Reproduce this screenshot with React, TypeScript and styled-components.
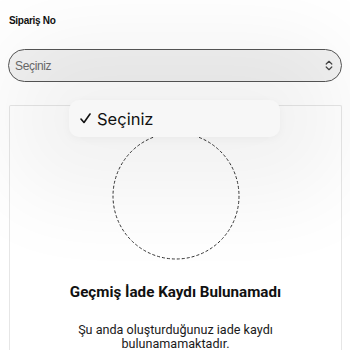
import React from "react";
import styled, { createGlobalStyle } from "styled-components";

const Global = createGlobalStyle`
  html, body { margin: 0; padding: 0; background: #ffffff; }
  body { width: 350px; height: 350px; overflow: hidden; font-family: "Liberation Sans", Arial, sans-serif; }
`;

const Page = styled.div`
  position: relative;
  width: 350px;
  height: 350px;
  padding: 14px 8px 0 8px;
  box-sizing: border-box;
  display: flex;
  flex-direction: column;
  overflow: hidden;
`;

const Label = styled.label`
  flex-shrink: 0;
  font-family: "Liberation Sans", Arial, sans-serif;
  font-size: 10px;
  font-weight: 700;
  letter-spacing: -0.3px;
  color: #111;
  padding-left: 1px;
  line-height: 14px;
`;

const SelectBox = styled.div`
  flex-shrink: 0;
  margin-top: 21px;
  height: 33px;
  box-sizing: border-box;
  border: 1px solid #555;
  border-radius: 17px;
  display: flex;
  align-items: center;
  justify-content: space-between;
  padding: 0 8px 0 6px;
  background: #f1f1f1;
`;

const SelectText = styled.span`
  font-family: "Liberation Sans", Arial, sans-serif;
  font-size: 12px;
  letter-spacing: -0.35px;
  color: #6a6a6a;
`;

const Card = styled.div`
  flex-shrink: 0;
  height: 260px;
  margin-top: 23px;
  margin-left: 1px;
  border: 1px solid #e6e6e6;
  border-bottom: none;
  border-radius: 2px 2px 0 0;
  background: #fff;
  display: flex;
  flex-direction: column;
  align-items: center;
  padding-top: 26px;
  box-sizing: border-box;
`;

const Title = styled.h2`
  margin: 23px 0 0;
  font-family: Roboto, "Liberation Sans", sans-serif;
  font-weight: 700;
  font-size: 15.2px;
  line-height: 18px;
  color: #111;
`;

const Body = styled.p`
  margin: 22px 0 0;
  width: 220px;
  text-align: center;
  font-family: Roboto, "Liberation Sans", sans-serif;
  font-size: 12.6px;
  line-height: 14px;
  color: #1a1a1a;
`;

const Popup = styled.div`
  position: absolute;
  left: 69px;
  top: 100px;
  width: 211px;
  height: 37px;
  box-sizing: border-box;
  border-radius: 10px;
  background: #f7f7f7;
  box-shadow: 0 0 90px 60px rgba(0, 0, 0, 0.055), 0 2px 10px rgba(0, 0, 0, 0.04);
  display: flex;
  align-items: center;
  gap: 6px;
  padding-left: 11px;
`;

const PopupText = styled.span`
  font-family: Inter, "Liberation Sans", sans-serif;
  font-size: 16.5px;
  color: #111;
`;

const Circle = () => (
  <svg width="128" height="128" viewBox="0 0 128 128">
    <circle cx="64" cy="64" r="63" fill="none" stroke="#333" strokeWidth="1" strokeDasharray="3 2" />
  </svg>
);

const Chevrons = () => (
  <svg width="8" height="11" viewBox="0 0 8 11">
    <path d="M1.2 4 L4 1.3 L6.8 4" fill="none" stroke="#444" strokeWidth="1.2" strokeLinecap="round" strokeLinejoin="round" />
    <path d="M1.2 7 L4 9.7 L6.8 7" fill="none" stroke="#444" strokeWidth="1.2" strokeLinecap="round" strokeLinejoin="round" />
  </svg>
);

const Check = () => (
  <svg width="11" height="11" viewBox="0 0 11 11">
    <path d="M1 6 L4 9.5 L10 1" fill="none" stroke="#111" strokeWidth="1.6" strokeLinecap="round" strokeLinejoin="round" />
  </svg>
);

export default function App() {
  return (
    <>
      <Global />
      <Page>
        <Label>Sipariş No</Label>
        <SelectBox>
          <SelectText>Seçiniz</SelectText>
          <Chevrons />
        </SelectBox>
        <Card>
          <Circle />
          <Title>Geçmiş İade Kaydı Bulunamadı</Title>
          <Body>Şu anda oluşturduğunuz iade kaydı bulunamamaktadır.</Body>
        </Card>
        <Popup>
          <Check />
          <PopupText>Seçiniz</PopupText>
        </Popup>
      </Page>
    </>
  );
}
